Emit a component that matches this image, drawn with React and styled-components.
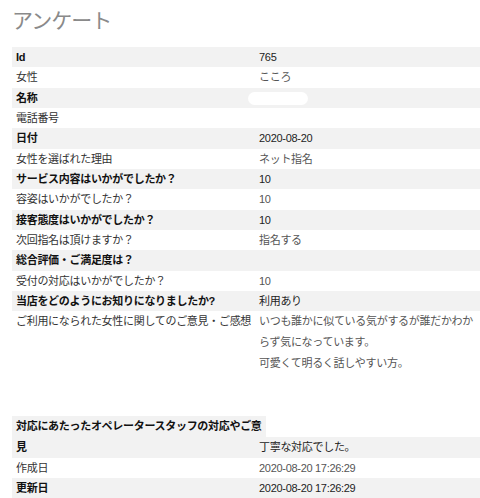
import React from "react";
import styled, { createGlobalStyle } from "styled-components";

const GlobalStyle = createGlobalStyle`
  body {
    margin: 0;
    background: #fff;
    font-family: "Liberation Sans", "Noto Sans CJK JP", sans-serif;
    font-size: 11px;
    letter-spacing: -0.3px;
    color: #333;
  }
`;

const rows = [
  { label: "Id", value: "765" },
  { label: "女性", value: "こころ" },
  { label: "名称", masked: true },
  { label: "電話番号", value: "" },
  { label: "日付", value: "2020-08-20" },
  { label: "女性を選ばれた理由", value: "ネット指名" },
  { label: "サービス内容はいかがでしたか？", value: "10" },
  { label: "容姿はいかがでしたか？", value: "10" },
  { label: "接客態度はいかがでしたか？", value: "10" },
  { label: "次回指名は頂けますか？", value: "指名する" },
  { label: "総合評価・ご満足度は？", value: "" },
  { label: "受付の対応はいかがでしたか？", value: "10" },
  { label: "当店をどのようにお知りになりましたか?", value: "利用あり" },
  {
    label: "ご利用になられた女性に関してのご意見・ご感想",
    lines: [
      "いつも誰かに似ている気がするが誰だかわか",
      "らず気になっています。",
      "可愛くて明るく話しやすい方。",
      "",
      "",
    ],
  },
  {
    label: "見",
    overflow: "対応にあたったオペレータースタッフの対応やご意",
    value: "丁寧な対応でした。",
  },
  { label: "作成日", value: "2020-08-20 17:26:29" },
  { label: "更新日", value: "2020-08-20 17:26:29" },
];

export default function App() {
  return (
    <>
      <GlobalStyle />
      <Page>
        <Title>アンケート</Title>
        <Sheet>
          {rows.map((row, i) => {
            const striped = i % 2 === 0;
            return (
              <React.Fragment key={i}>
                {row.overflow && (
                  <OverflowLabel>{row.overflow}</OverflowLabel>
                )}
                <Row $striped={striped}>
                  <Label $strong={striped}>{row.label}</Label>
                  <Value $strong={striped} $tall={!!row.lines}>
                    {row.masked && <Mask />}
                    {row.lines
                      ? row.lines.map((line, j) => <Line key={j}>{line}</Line>)
                      : row.value}
                  </Value>
                </Row>
              </React.Fragment>
            );
          })}
        </Sheet>
      </Page>
    </>
  );
}

/*******************************
 *   STYLED COMPONENTS          *
 *******************************/

const Page = styled.div`
  padding: 8px 0 0 12px;
`;

const Title = styled.h2`
  margin: 0 0 14px;
  font-size: 21px;
  line-height: 25px;
  letter-spacing: -1px;
  font-weight: 400;
  color: #8a8a8a;
`;

const Sheet = styled.div`
  display: flex;
  flex-direction: column;
`;

const Row = styled.div`
  display: flex;
  background-color: ${(p) => (p.$striped ? "#f2f2f2" : "#fff")};
  line-height: 20.35px;
`;

const Label = styled.div`
  width: 243px;
  flex-shrink: 0;
  padding: 0 4px;
  box-sizing: border-box;
  white-space: nowrap;
  font-weight: ${(p) => (p.$strong ? 700 : 400)};
  color: ${(p) => (p.$strong ? "#111" : "#333")};
`;

const Value = styled.div`
  flex: 1;
  padding: 0 4px;
  line-height: ${(p) => (p.$tall ? "21px" : "inherit")};
  color: ${(p) => (p.$strong ? "#222" : "#555")};
`;

const Line = styled.div`
  min-height: 21px;
  white-space: nowrap;
`;

const OverflowLabel = styled.div`
  align-self: flex-start;
  padding: 0 4px;
  line-height: 21px;
  background-color: #f2f2f2;
  font-weight: 700;
  color: #111;
  white-space: nowrap;
`;

const Mask = styled.span`
  display: inline-block;
  width: 60px;
  height: 13px;
  margin-left: -11px;
  border-radius: 7px;
  background-color: #fff;
  vertical-align: middle;
`;
